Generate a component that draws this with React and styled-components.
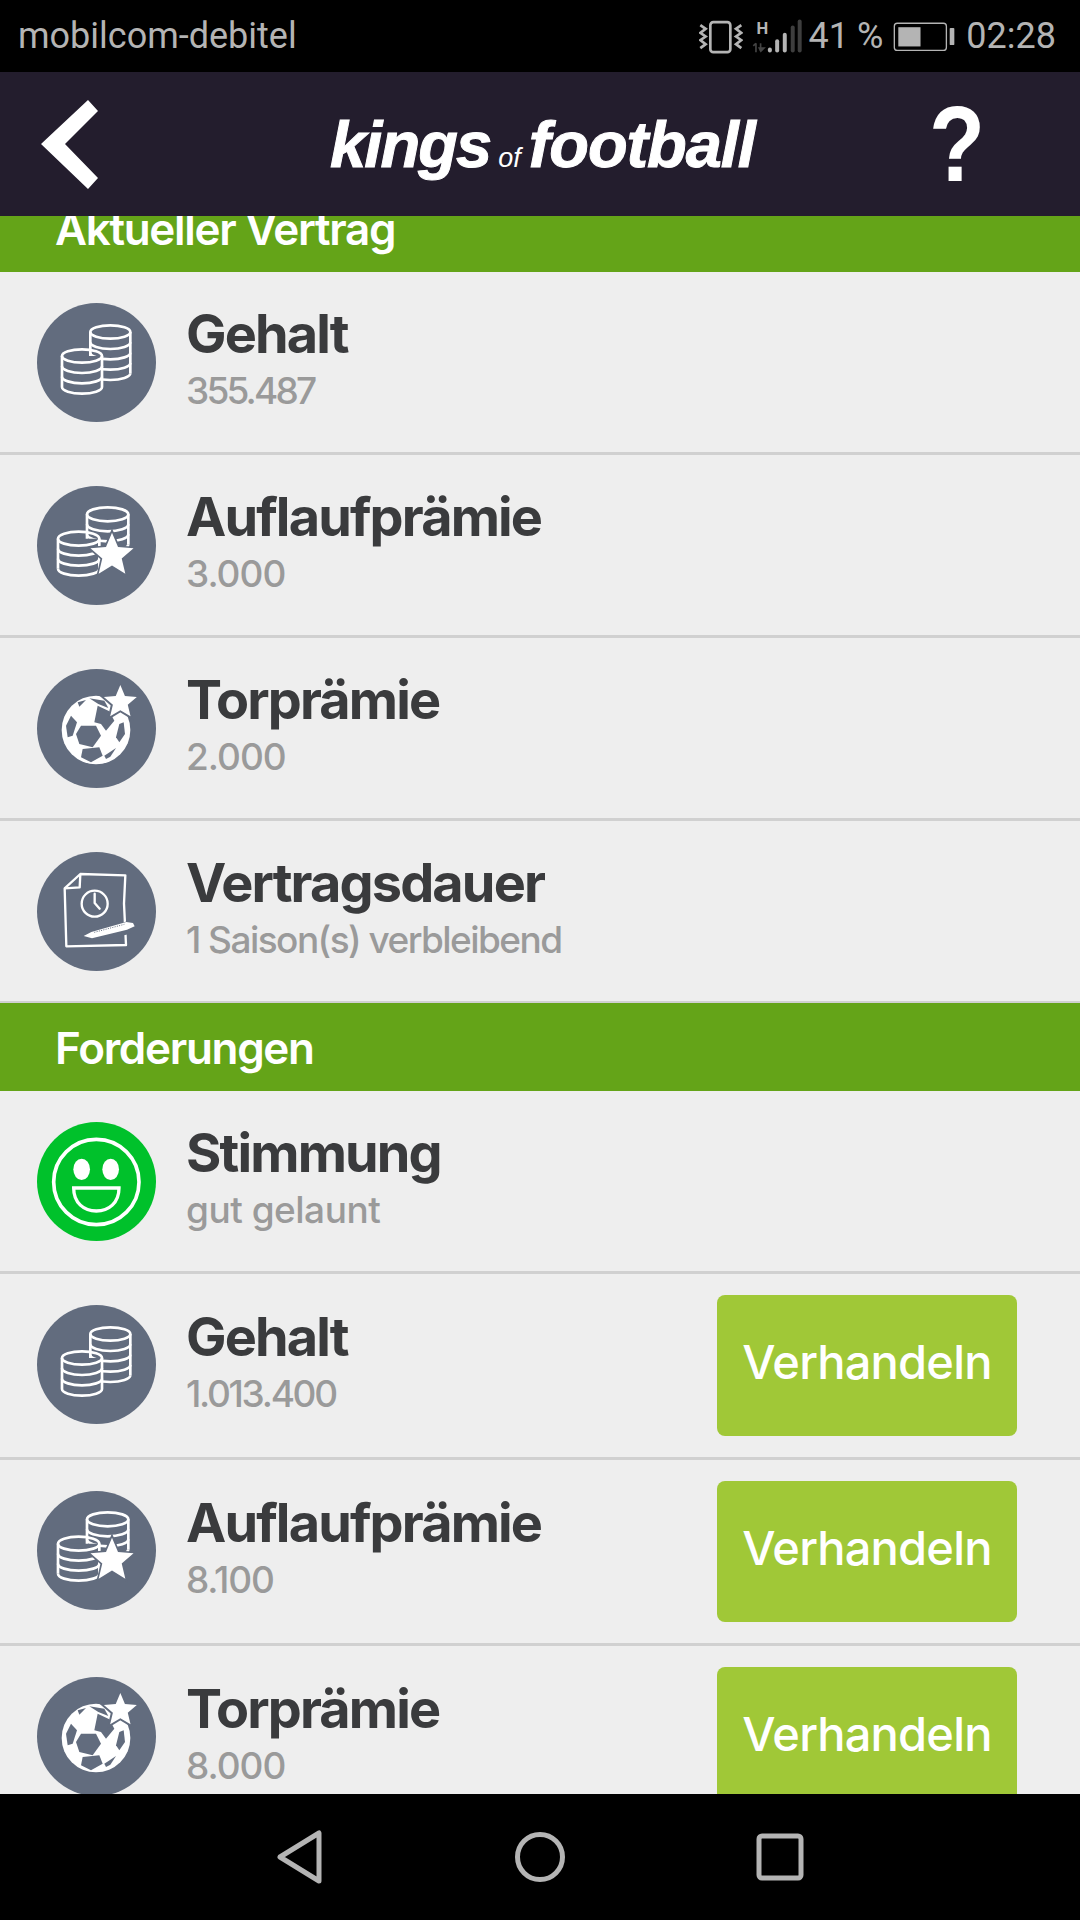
import React from "react";
import styled, { createGlobalStyle } from "styled-components";

const GlobalStyle = createGlobalStyle`
  html, body {
    margin: 0;
    padding: 0;
    background: #000;
  }
`;

const SLATE = "#626c7e";
const titleFont = `Inter, "Liberation Sans", sans-serif`;

const starPoints = (cx, cy, r) => {
  const pts = [];
  for (let i = 0; i < 10; i++) {
    const rad = i % 2 === 0 ? r : r * 0.45;
    const a = -Math.PI / 2 + (i * Math.PI) / 5;
    pts.push(`${(cx + rad * Math.cos(a)).toFixed(1)},${(cy + rad * Math.sin(a)).toFixed(1)}`);
  }
  return pts.join(" ");
};

function CoinStack({ cx, top, rx, ry, step, layers }) {
  const l = cx - rx;
  const r = cx + rx;
  const bottom = top + step * layers;
  const arcs = [];
  for (let i = 1; i <= layers; i++) {
    arcs.push(<path key={i} d={`M${l} ${top + step * i} A${rx} ${ry} 0 0 0 ${r} ${top + step * i}`} />);
  }
  return (
    <g fill="none" stroke="#fff" strokeWidth="8">
      <path d={`M${l} ${top} V${bottom} A${rx} ${ry} 0 0 0 ${r} ${bottom} V${top} Z`} fill={SLATE} stroke="none" />
      <ellipse cx={cx} cy={top} rx={rx} ry={ry} />
      <path d={`M${l} ${top} V${bottom} M${r} ${top} V${bottom}`} />
      {arcs}
    </g>
  );
}

const CoinsIcon = () => (
  <svg viewBox="50 38 357 357" width="119" height="119">
    <CoinStack cx={270} top={125} rx={60} ry={20} step={31} layers={4} />
    <CoinStack cx={185} top={197} rx={60} ry={20} step={31} layers={3} />
  </svg>
);

const CoinsStarIcon = () => (
  <svg viewBox="50 587 357 357" width="119" height="119">
    <CoinStack cx={262} top={672} rx={62} ry={21} step={30} layers={3} />
    <CoinStack cx={175} top={745} rx={62} ry={21} step={30} layers={3} />
    <polygon points={starPoints(275, 795, 68)} fill="#fff" stroke={SLATE} strokeWidth="10" paintOrder="stroke" />
  </svg>
);

const BallIcon = () => (
  <svg viewBox="48 55 357 357" width="119" height="119">
    <circle cx="225" cy="238" r="103" fill="#fff" />
    <g fill={SLATE}>
      <polygon points="180,225 225,225 240,255 215,290 175,280 165,250" />
      <polygon points="150,195 168,215 155,255 140,260 135,225" />
      <polygon points="185,295 235,290 245,315 210,335 180,320" />
      <polygon points="295,220 308,215 312,250 295,275 285,260" />
      <polygon points="250,315 285,292 268,318 255,325" />
      <polygon points="230,165 265,182 280,210 255,240 240,220 220,215" />
      <polygon points="170,155 195,148 175,168" />
      <polygon points="205,143 250,150 262,172 232,160" />
    </g>
    <polygon points={starPoints(298, 155, 52)} fill="#fff" stroke={SLATE} strokeWidth="12" paintOrder="stroke" />
  </svg>
);

const ContractIcon = () => (
  <svg viewBox="50 605 357 357" width="119" height="119">
    <g fill="none" stroke="#fff" strokeWidth="7" strokeLinejoin="round">
      <path d="M180 671 L315 675 L311 760 L317 884 L138 888 L133 714 Z" />
      <path d="M133 714 L178 711 L180 671" />
      <circle cx="223" cy="760" r="39" />
      <path d="M223 730 V758 L238 775" strokeLinecap="round" />
    </g>
    <polygon points="180,862 322,812 350,825 330,850 205,880" fill={SLATE} />
    <polygon points="190,857 213,845 318,815 338,818 343,828 320,838 215,864" fill="#fff" />
    <path d="M222 846 L312 822" stroke={SLATE} strokeWidth="3" strokeDasharray="3 4" fill="none" />
  </svg>
);

const SmileyIcon = () => (
  <svg viewBox="50 65 357 357" width="119" height="119">
    <circle cx="228" cy="245" r="128" fill="none" stroke="#fff" strokeWidth="11" />
    <ellipse cx="184" cy="207" rx="25" ry="32" fill="#fff" />
    <ellipse cx="271" cy="207" rx="25" ry="32" fill="#fff" />
    <path d="M160 263 H296 C296 308 265 332 228 332 C191 332 160 308 160 263 Z" fill="none" stroke="#fff" strokeWidth="10" />
  </svg>
);

const VibrateIcon = () => (
  <svg viewBox="56 56 132 104" width="44" height="35">
    <g fill="none" stroke="#b4b4b4">
      <rect x="90" y="65" width="60" height="90" rx="9" strokeWidth="8" />
      <path d="M60 74 L76 85 L60 97 L76 108 L60 119 L76 131 L60 143" strokeWidth="8" />
      <path d="M183 74 L167 85 L183 97 L167 108 L183 119 L167 131 L183 143" strokeWidth="8" />
    </g>
  </svg>
);

const SignalIcon = () => (
  <svg viewBox="218 52 160 108" width="53" height="36">
    <text x="255" y="100" textAnchor="middle" fontFamily="Roboto, sans-serif" fontWeight="700" fontSize="50" fill="#b4b4b4">H</text>
    <g stroke="#444" strokeWidth="5" fill="none">
      <path d="M236 128 V155 M228 136 L236 128" />
      <path d="M250 128 V152" />
      <polygon points="242,140 266,140 250,156" fill="#444" stroke="none" />
    </g>
    <g strokeWidth="12" strokeLinecap="round" fill="none">
      <path d="M278 147 V150" stroke="#b4b4b4" />
      <path d="M300 122 V150" stroke="#b4b4b4" />
      <path d="M323 102 V150" stroke="#b4b4b4" />
      <path d="M347 80 V150" stroke="#3e3e3e" />
      <path d="M368 62 V150" stroke="#3e3e3e" />
    </g>
  </svg>
);

const BatteryIcon = () => (
  <svg viewBox="645 60 190 92" width="63" height="31">
    <rect x="649" y="66" width="157" height="82" rx="9" fill="none" stroke="#b4b4b4" strokeWidth="4" />
    <rect x="661" y="78" width="67" height="58" fill="#b4b4b4" />
    <rect x="816" y="80" width="14" height="52" rx="3" fill="#b4b4b4" />
  </svg>
);

const NavBack = () => (
  <svg viewBox="0 0 50 54" width="50" height="54">
    <path d="M5 27 L44 3 V51 Z" fill="none" stroke="#b4b4b4" strokeWidth="5" strokeLinejoin="round" />
  </svg>
);

const NavHome = () => (
  <svg viewBox="0 0 50 54" width="50" height="54">
    <circle cx="25" cy="27" r="22.5" fill="none" stroke="#b4b4b4" strokeWidth="5" />
  </svg>
);

const NavRecent = () => (
  <svg viewBox="0 0 50 54" width="50" height="54">
    <rect x="4" y="6" width="42" height="42" rx="3" fill="none" stroke="#b4b4b4" strokeWidth="5" />
  </svg>
);

const Screen = styled.div`
  width: 1080px;
  height: 1920px;
  display: flex;
  flex-direction: column;
  overflow: hidden;
  background: #eee;
`;

const StatusBar = styled.div`
  height: 72px;
  flex: none;
  background: #000;
  color: #b4b4b4;
  font-family: Roboto, sans-serif;
  font-size: 36px;
  display: flex;
  align-items: center;
  justify-content: space-between;
  padding: 0 24px 0 18px;
`;

const StatusRight = styled.div`
  display: flex;
  align-items: center;
  svg:first-child {
    margin-right: 7px;
  }
`;

const Percent = styled.span`
  margin: 0 10px 0 6px;
  word-spacing: -1px;
`;

const Time = styled.span`
  margin-left: 10px;
`;

const Header = styled.header`
  height: 144px;
  flex: none;
  background: #231d2d;
  display: flex;
  align-items: center;
  padding: 0 90px 0 41px;
`;

const BackButton = styled.svg`
  display: block;
  width: 57px;
  height: 89px;
`;

const Logo = styled.div`
  margin-left: 232px;
  color: #fff;
  font-family: "Liberation Sans", sans-serif;
  font-style: italic;
  font-weight: 700;
  font-size: 65px;
  letter-spacing: -1.9px;
  white-space: nowrap;
  -webkit-text-stroke: 1px #fff;
`;

const LogoOf = styled.span`
  font-size: 27px;
  font-weight: 400;
  letter-spacing: 0;
  margin: 0 8px 0 8px;
  -webkit-text-stroke: 0;
`;

const LogoWord = styled.span`
  letter-spacing: -1.1px;
`;

const Help = styled.div`
  margin-left: auto;
  color: #fff;
  font-family: "Liberation Sans", sans-serif;
  font-weight: 700;
  font-size: 108px;
  line-height: 1;
  transform: scaleX(0.85);
`;

const Content = styled.main`
  flex: 1;
  min-height: 0;
  overflow: hidden;
`;

const SectionBand = styled.div`
  height: ${(p) => p.$height}px;
  background: #64a418;
  display: flex;
  align-items: flex-end;
  overflow: hidden;
  padding-left: 55px;
  &:not(:first-child) {
    margin-top: -1px;
  }
`;

const SectionLabel = styled.div`
  height: 88px;
  flex: none;
  line-height: 90px;
  color: #fff;
  font-family: ${titleFont};
  font-weight: 600;
  font-size: 44px;
  letter-spacing: -1.3px;
`;

const Row = styled.div`
  height: ${(p) => p.$height}px;
  box-sizing: border-box;
  display: flex;
  align-items: center;
  padding: 0 63px ${(p) => p.$lift}px 37px;
  border-bottom: 3px solid #d0d0d0;
`;

const IconCircle = styled.div`
  width: 119px;
  height: 119px;
  flex: none;
  border-radius: 50%;
  background: ${(p) => p.$color};
  svg {
    display: block;
  }
`;

const RowText = styled.div`
  margin: -3px 0 0 30px;
  flex: 1;
  min-width: 0;
`;

const RowTitle = styled.div`
  color: #3a3b3d;
  font-family: ${titleFont};
  font-weight: 700;
  font-size: 54px;
  line-height: 58px;
  letter-spacing: -1.85px;
`;

const RowValue = styled.div`
  margin-top: 3px;
  color: #9a9a9a;
  font-family: ${titleFont};
  font-weight: 500;
  font-size: 37px;
  line-height: 50px;
  letter-spacing: ${(p) => p.$tracking}px;
`;

const NegotiateButton = styled.button`
  width: 300px;
  height: 141px;
  flex: none;
  margin-top: 2px;
  border: 0;
  border-radius: 8px;
  background: #a0c837;
  color: #fff;
  font-family: ${titleFont};
  font-weight: 500;
  font-size: 47px;
  letter-spacing: -0.8px;
  padding: 0 0 8px;
`;

const NavBar = styled.nav`
  height: 126px;
  flex: none;
  background: #000;
  display: flex;
  align-items: center;
  justify-content: center;
  gap: 190px;
  svg {
    display: block;
  }
`;

const contract = [
  { icon: <CoinsIcon />, title: "Gehalt", value: "355.487", tracking: -2.8 },
  { icon: <CoinsStarIcon />, title: "Auflaufprämie", value: "3.000", tracking: -1 },
  { icon: <BallIcon />, title: "Torprämie", value: "2.000", tracking: -1 },
  { icon: <ContractIcon />, title: "Vertragsdauer", value: "1 Saison(s) verbleibend", tracking: -1.55 },
];

const demands = [
  { icon: <CoinsIcon />, title: "Gehalt", value: "1.013.400", tracking: -2.3 },
  { icon: <CoinsStarIcon />, title: "Auflaufprämie", value: "8.100", tracking: -1.2 },
  { icon: <BallIcon />, title: "Torprämie", value: "8.000", tracking: -1 },
];

function InfoRow({ icon, title, value, tracking, color = SLATE, height = 183, lift = 0, action }) {
  return (
    <Row $height={height} $lift={lift}>
      <IconCircle $color={color}>{icon}</IconCircle>
      <RowText>
        <RowTitle>{title}</RowTitle>
        <RowValue $tracking={tracking}>{value}</RowValue>
      </RowText>
      {action && <NegotiateButton>Verhandeln</NegotiateButton>}
    </Row>
  );
}

export default function App() {
  return (
    <Screen>
      <GlobalStyle />
      <StatusBar>
        <span>mobilcom-debitel</span>
        <StatusRight>
          <VibrateIcon />
          <SignalIcon />
          <Percent>41 %</Percent>
          <BatteryIcon />
          <Time>02:28</Time>
        </StatusRight>
      </StatusBar>
      <Header>
        <BackButton viewBox="0 0 57 89">
          <polygon points="0,44 47,0 57,11 24,44 57,78 47,89" fill="#fff" />
        </BackButton>
        <Logo>
          kings<LogoOf>of</LogoOf>
          <LogoWord>football</LogoWord>
        </Logo>
        <Help>?</Help>
      </Header>
      <Content>
        <SectionBand $height={56}>
          <SectionLabel>Aktueller Vertrag</SectionLabel>
        </SectionBand>
        {contract.map((item) => (
          <InfoRow key={item.title} {...item} />
        ))}
        <SectionBand $height={88}>
          <SectionLabel>Forderungen</SectionLabel>
        </SectionBand>
        <InfoRow icon={<SmileyIcon />} title="Stimmung" value="gut gelaunt" tracking={-0.5} color="#00c12b" height={183} />
        {demands.map((item) => (
          <InfoRow key={item.title} {...item} height={186} lift={2} action />
        ))}
      </Content>
      <NavBar>
        <NavBack />
        <NavHome />
        <NavRecent />
      </NavBar>
    </Screen>
  );
}
